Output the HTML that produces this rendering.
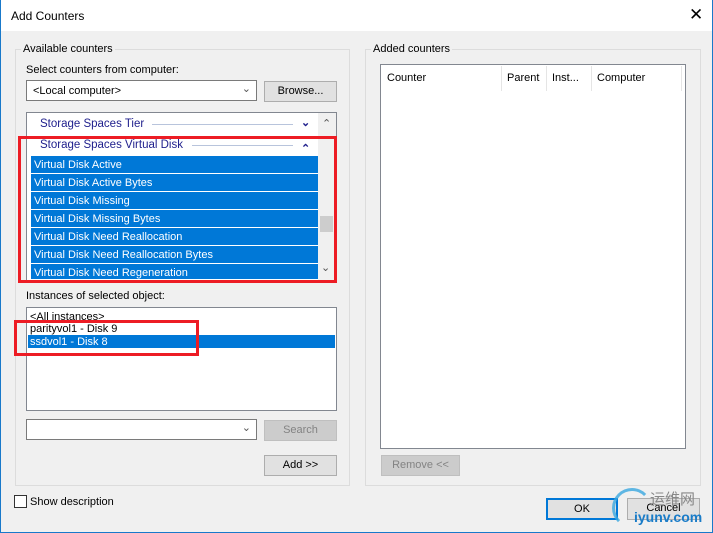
<!DOCTYPE html>
<html><head><meta charset="utf-8"><style>
*{margin:0;padding:0;box-sizing:border-box}
body{width:713px;height:533px;background:#f0f0f0;font-family:"Liberation Sans",sans-serif;font-size:11px;color:#000;position:relative;overflow:hidden}
.a{position:absolute}
.win{left:0;top:0;width:713px;height:533px;border:1px solid #1979ca;border-top:none}
.title{left:1px;top:0;width:711px;height:31px;background:#fff}
.grp{border:1px solid #dcdcdc}
.lbl{background:#f0f0f0;padding:0 2px}
.box{background:#fff;border:1px solid #7a7a7a}
.btn{background:#e1e1e1;border:1px solid #adadad;text-align:center;line-height:19px}
.dis{color:#838383;background:#cccccc;border-color:#bfbfbf}
.sel{background:#0078d7;color:#fff;height:17px;line-height:19px;padding-left:3px;left:31px;width:287px}
.hdr{color:#1e1e8c;font-size:11.5px}
.red{border:3px solid #ed1c24}
</style></head><body>
<div class="a title"></div>
<div class="a win"></div>
<div class="a" style="left:11px;top:9px;font-size:12px">Add Counters</div>
<div class="a" style="left:689px;top:5px;font-size:17px">✕</div>

<div class="a grp" style="left:15px;top:49px;width:335px;height:437px"></div>
<div class="a lbl" style="left:21px;top:43px">Available counters</div>
<div class="a" style="left:26px;top:64px">Select counters from computer:</div>
<div class="a box" style="left:26px;top:80px;width:231px;height:21px;padding:4px 6px">&lt;Local computer&gt;<span class="a" style="right:5px;top:1px;color:#555">⌄</span></div>
<div class="a btn" style="left:264px;top:81px;width:73px;height:21px">Browse...</div>

<div class="a box" style="left:26px;top:112px;width:311px;height:169px;border-color:#828790"></div>
<div class="a" style="left:318px;top:113px;width:18px;height:167px;background:#f0f0f0"></div>
<div class="a" style="left:320px;top:216px;width:13px;height:16px;background:#cdcdcd"></div>
<div class="a" style="left:322px;top:117px;font-size:11px;color:#555">⌃</div>
<div class="a" style="left:321px;top:261px;font-size:11px;color:#555">⌄</div>
<div class="a hdr" style="left:40px;top:118px">Storage Spaces Tier</div>
<div class="a" style="left:152px;top:124px;width:141px;height:1px;background:#b8c4dc"></div>
<div class="a" style="left:301px;top:116px;color:#1e1e8c;font-weight:bold">⌄</div>
<div class="a hdr" style="left:40px;top:139px">Storage Spaces Virtual Disk</div>
<div class="a" style="left:192px;top:145px;width:101px;height:1px;background:#b8c4dc"></div>
<div class="a" style="left:301px;top:142px;color:#1e1e8c;font-weight:bold">⌃</div>
<div class="a sel" style="top:156px">Virtual Disk Active</div>
<div class="a sel" style="top:174px">Virtual Disk Active Bytes</div>
<div class="a sel" style="top:192px">Virtual Disk Missing</div>
<div class="a sel" style="top:210px">Virtual Disk Missing Bytes</div>
<div class="a sel" style="top:228px">Virtual Disk Need Reallocation</div>
<div class="a sel" style="top:246px">Virtual Disk Need Reallocation Bytes</div>
<div class="a sel" style="top:264px;height:15px;overflow:hidden">Virtual Disk Need Regeneration</div>
<div class="a red" style="left:18px;top:136px;width:319px;height:147px"></div>

<div class="a" style="left:26px;top:290px">Instances of selected object:</div>
<div class="a box" style="left:26px;top:307px;width:311px;height:104px;border-color:#828790"></div>
<div class="a" style="left:30px;top:311px">&lt;All instances&gt;</div>
<div class="a" style="left:30px;top:323px">parityvol1 - Disk 9</div>
<div class="a" style="left:28px;top:335px;width:307px;height:13px;background:#0078d7;color:#fff;padding-left:2px;line-height:14px">ssdvol1 - Disk 8</div>
<div class="a red" style="left:14px;top:320px;width:185px;height:36px"></div>

<div class="a box" style="left:26px;top:419px;width:231px;height:21px"><span class="a" style="right:5px;top:1px;color:#555">⌄</span></div>
<div class="a btn dis" style="left:264px;top:420px;width:73px;height:21px">Search</div>
<div class="a btn" style="left:264px;top:455px;width:73px;height:21px">Add &gt;&gt;</div>

<div class="a" style="left:14px;top:495px;width:13px;height:13px;border:1px solid #333;background:#fff"></div>
<div class="a" style="left:30px;top:496px">Show description</div>

<div class="a grp" style="left:365px;top:49px;width:336px;height:437px"></div>
<div class="a lbl" style="left:371px;top:43px">Added counters</div>
<div class="a box" style="left:380px;top:64px;width:306px;height:385px;border-color:#828790"></div>
<div class="a" style="left:387px;top:72px">Counter</div>
<div class="a" style="left:501px;top:66px;width:1px;height:25px;background:#e5e5e5"></div>
<div class="a" style="left:507px;top:72px">Parent</div>
<div class="a" style="left:546px;top:66px;width:1px;height:25px;background:#e5e5e5"></div>
<div class="a" style="left:552px;top:72px">Inst...</div>
<div class="a" style="left:591px;top:66px;width:1px;height:25px;background:#e5e5e5"></div>
<div class="a" style="left:597px;top:72px">Computer</div>
<div class="a" style="left:681px;top:66px;width:1px;height:25px;background:#e5e5e5"></div>
<div class="a btn dis" style="left:381px;top:455px;width:79px;height:21px">Remove &lt;&lt;</div>

<div class="a btn" style="left:546px;top:498px;width:72px;height:22px;border:2px solid #0078d7">OK</div>
<div class="a btn" style="left:627px;top:498px;width:73px;height:22px">Cancel</div>
<div class="a" style="left:612px;top:488px;width:40px;height:40px;border-radius:50%;border:3px solid #3aa8e0;border-right-color:transparent;border-bottom-color:transparent;opacity:.8"></div>
<div class="a" style="left:650px;top:488px;font-size:15px;color:#888;font-family:'Noto Sans CJK SC',sans-serif">运维网</div>
<div class="a" style="left:634px;top:509px;font-size:14px;color:#1a7cc8;font-weight:bold">iyunv.com</div>
</body></html>
